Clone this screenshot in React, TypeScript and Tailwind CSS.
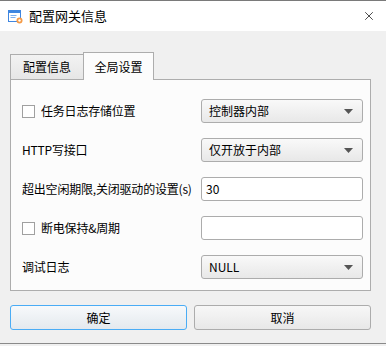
import { X } from "lucide-react";

const font = { fontFamily: '"Noto Sans CJK SC", "Microsoft YaHei", sans-serif' };

const Caret = () => (
  <svg width="9" height="5" viewBox="0 0 9 5" className="shrink-0">
    <path d="M0 0h9L4.5 5z" fill="#555" />
  </svg>
);

const Select = ({ value }: { value: string }) => (
  <div className="w-[162px] h-[24px] shrink-0 flex items-center justify-between pl-[7px] pr-[9px] border border-[#acacac] rounded-[3px] bg-gradient-to-b from-[#f9f9f9] to-[#e8e8e8] text-[12px] text-black">
    <span>{value}</span>
    <Caret />
  </div>
);

const Input = ({ value }: { value?: string }) => (
  <div className="w-[162px] h-[24px] shrink-0 flex items-center pl-[4px] border border-[#acacac] rounded-[3px] bg-white text-[12px] text-black">
    {value}
  </div>
);

const Check = () => (
  <span className="w-[13px] h-[13px] border border-[#a0a0a0] bg-white shrink-0 mr-[6px]" />
);

const Row = ({ label, check, children }: { label: string; check?: boolean; children: React.ReactNode }) => (
  <div className="flex items-center justify-between h-[24px]">
    <div className="flex items-center text-[12px] text-black whitespace-nowrap tracking-[-0.2px]">
      {check && <Check />}
      <span>{label}</span>
    </div>
    {children}
  </div>
);

export default function App() {
  return (
    <div style={font} className="w-[386px] h-[346px] bg-[#f0f0f0] border-t border-[#7a7a7a] flex flex-col">
      <div className="h-[30px] bg-white flex items-center pl-[8px] pr-[10px]">
        <svg width="15" height="15" viewBox="0 0 15 15" className="shrink-0">
          <rect x="0.5" y="1.5" width="12" height="11" fill="#fff" stroke="#3f86e0" />
          <rect x="0.5" y="1.5" width="12" height="2.5" fill="#3f86e0" />
          <path d="M2.5 6.5h6M2.5 8.5h5" stroke="#7fb0ee" />
          <circle cx="11.5" cy="11.5" r="3" fill="#f59a45" />
          <circle cx="11.5" cy="11.5" r="1.2" fill="#fff" />
        </svg>
        <span className="ml-[6px] text-[13px] text-black">配置网关信息</span>
        <X className="ml-auto w-[14px] h-[14px] text-black" strokeWidth={1.2} />
      </div>

      <div className="pl-[10px] pr-[15px] pt-[21px] flex flex-col">
        <div className="flex items-end h-[27px]">
          <div className="w-[73px] h-[25px] border border-[#adadad] border-b-0 border-r-0 bg-gradient-to-b from-[#f2f2f2] to-[#e6e6e6] flex items-center justify-center text-[12px] text-black">
            配置信息
          </div>
          <div className="w-[71px] h-[28px] -mb-px relative z-10 border border-[#adadad] border-b-0 bg-[#fcfcfc] flex items-center justify-center text-[12px] text-black">
            全局设置
          </div>
        </div>
        <div className="h-[212px] border border-[#adadad] bg-[#fcfcfc] pt-[19px] pl-[11px] pr-[7px] flex flex-col gap-[15px]">
          <Row label="任务日志存储位置" check>
            <Select value="控制器内部" />
          </Row>
          <Row label="HTTP写接口">
            <Select value="仅开放于内部" />
          </Row>
          <Row label="超出空闲期限,关闭驱动的设置(s)">
            <Input value="30" />
          </Row>
          <Row label="断电保持&周期" check>
            <Input />
          </Row>
          <Row label="调试日志">
            <Select value="NULL" />
          </Row>
        </div>

        <div className="flex gap-[7px] mt-[14px]">
          <button className="flex-1 h-[25px] border border-[#4aacf5] rounded-[3px] bg-gradient-to-b from-[#f7f9fb] to-[#e4e9ee] text-[12px] text-black">
            确定
          </button>
          <button className="flex-1 h-[25px] border border-[#acacac] rounded-[3px] bg-gradient-to-b from-[#f7f7f7] to-[#e8e8e8] text-[12px] text-black">
            取消
          </button>
        </div>
      </div>
      <div className="mt-auto h-[3px] border-t border-[#8a8a8a] bg-[#f0f0f0]" />
    </div>
  );
}
